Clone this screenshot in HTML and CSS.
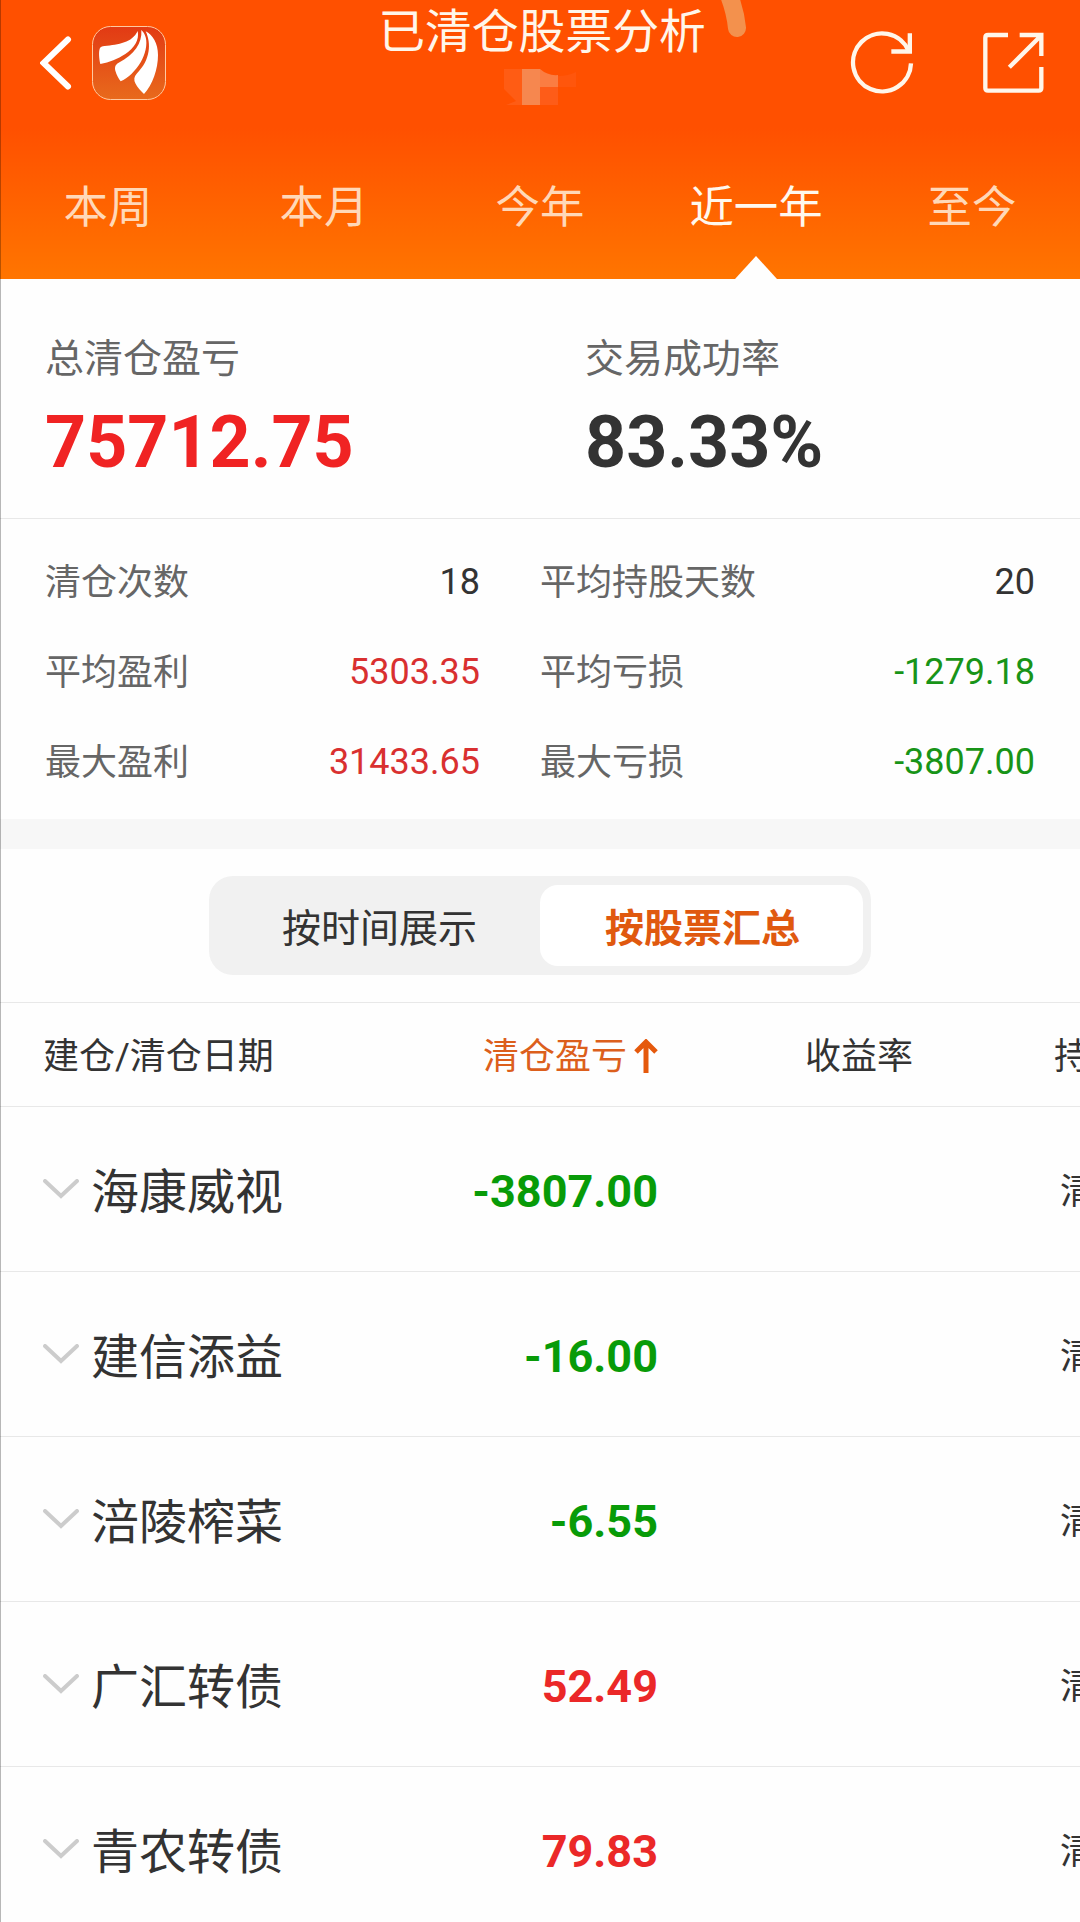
FILE: index.html
```
<!DOCTYPE html>
<html lang="zh-CN">
<head>
    <meta charset="UTF-8">
    <meta name="viewport" content="width=device-width, initial-scale=1.0">
    <title>已清仓股票分析</title>
    <link rel="stylesheet" href="styles.css">
</head>
<body>
    <header class="header">
        <div class="navbar">
            <div class="nav-left">
                <svg class="icon-back" viewBox="0 0 32 54">
                    <path d="M28 3.500 3.500 27l24.500 23.500" fill="none" stroke="#fff" stroke-width="6" stroke-linecap="round"/>
                </svg>
                <svg class="logo" viewBox="276 78 222 222">
                    <defs>
                        <linearGradient id="logoBg" x1="0" y1="0" x2="0" y2="1">
                            <stop offset="0" stop-color="#e23a14"/>
                            <stop offset="1" stop-color="#e86a1c"/>
                        </linearGradient>
                    </defs>
                    <rect x="277.500" y="79.500" width="219" height="219" rx="54" fill="url(#logoBg)" stroke="#ffc9a0" stroke-width="3"/>
                    <g fill="#fff">
                        <path d="M301 192C297 175 296 156 299 146C301 141 306 139 314 138C355 134 397 128 413 93C419 120 402 144 376 162C353 177 328 187 301 192Z"/>
                        <path d="M424 90C427 130 403 163 356 188C345 194 344 202 346 212C350 226 356 236 362 244C384 235 406 213 422 187C436 163 443 134 437 112C434 102 430 95 424 90Z"/>
                        <path d="M437 94C454 130 452 180 410 221C402 229 401 240 406 250C412 262 422 273 432 282C458 254 474 207 474 165C474 130 458 105 437 94Z"/>
                    </g>
                </svg>
            </div>
            <div class="nav-title">
                <h1>已清仓股票分析</h1>
                <svg class="mosaic" viewBox="0 0 72 44">
                    <path d="M0 3h18v36H2l10-4-12-12z" fill="#ff5c14"/>
                    <path d="M18 3h18v36H18z" fill="#f6874f"/>
                    <path d="M36 3q8 7 18 6v12H36z" fill="#fb7d42"/>
                    <path d="M36 21h18v18H36z" fill="#fe5c18"/>
                    <path d="M54 10q10 0 18-4v15H54z" fill="#ff560c"/>
                </svg>
                <svg class="streak" viewBox="0 0 32 38">
                    <path d="M10-12Q19 8 21 28" fill="none" stroke="#f3914d" stroke-width="18" stroke-linecap="round"/>
                </svg>
            </div>
            <div class="nav-right">
                <svg class="icon-refresh" viewBox="270 93 192 192">
                    <path d="M453 190A87 87 0 1 1 446 153" fill="none" stroke="#fff6ea" stroke-width="13"/>
                    <path d="M449.500 100V154.500H394" fill="none" stroke="#fff6ea" stroke-width="13"/>
                </svg>
                <svg class="icon-share" viewBox="666 93 192 192">
                    <path d="M744 105H684Q676 105 676 113V264Q676 272 684 272H836Q844 272 844 264V201" fill="none" stroke="#fff6ea" stroke-width="13"/>
                    <path d="M779 105H844V168M748 202L844 106" fill="none" stroke="#fff6ea" stroke-width="13"/>
                </svg>
            </div>
        </div>
        <nav class="tabs">
            <a class="tab">本周</a>
            <a class="tab">本月</a>
            <a class="tab">今年</a>
            <a class="tab active">近一年</a>
            <a class="tab">至今</a>
        </nav>
    </header>

    <section class="summary">
        <div class="summary-item">
            <div class="summary-label">总清仓盈亏</div>
            <div class="summary-value total">75712.75</div>
        </div>
        <div class="summary-item">
            <div class="summary-label">交易成功率</div>
            <div class="summary-value">83.33%</div>
        </div>
    </section>

    <section class="stats">
        <div class="stat"><span>清仓次数</span><b>18</b></div>
        <div class="stat"><span>平均持股天数</span><b>20</b></div>
        <div class="stat"><span>平均盈利</span><b class="up">5303.35</b></div>
        <div class="stat"><span>平均亏损</span><b class="down">-1279.18</b></div>
        <div class="stat"><span>最大盈利</span><b class="up">31433.65</b></div>
        <div class="stat"><span>最大亏损</span><b class="down">-3807.00</b></div>
    </section>

    <div class="switch-bar">
        <div class="switch">
            <div class="switch-item">按时间展示</div>
            <div class="switch-item selected">按股票汇总</div>
        </div>
    </div>

    <section class="table">
        <div class="row head">
            <div class="col-name">建仓/清仓日期</div>
            <div class="col-profit">清仓盈亏
                <svg class="icon-sort" viewBox="0 0 24 34">
                    <path d="M12 34V4M2 13 12 3l10 10" fill="none" stroke="#e5590c" stroke-width="5"/>
                </svg>
            </div>
            <div class="col-rate">收益率</div>
            <div class="col-hold">持</div>
        </div>
        <div class="row">
            <div class="col-name"><svg class="icon-down" viewBox="0 0 36 20"><path d="M2 2l16 15L34 2"/></svg>海康威视</div>
            <div class="col-profit down">-3807.00</div>
            <div class="col-rate"></div>
            <div class="col-hold">清</div>
        </div>
        <div class="row">
            <div class="col-name"><svg class="icon-down" viewBox="0 0 36 20"><path d="M2 2l16 15L34 2"/></svg>建信添益</div>
            <div class="col-profit down">-16.00</div>
            <div class="col-rate"></div>
            <div class="col-hold">清</div>
        </div>
        <div class="row">
            <div class="col-name"><svg class="icon-down" viewBox="0 0 36 20"><path d="M2 2l16 15L34 2"/></svg>涪陵榨菜</div>
            <div class="col-profit down">-6.55</div>
            <div class="col-rate"></div>
            <div class="col-hold">清</div>
        </div>
        <div class="row">
            <div class="col-name"><svg class="icon-down" viewBox="0 0 36 20"><path d="M2 2l16 15L34 2"/></svg>广汇转债</div>
            <div class="col-profit up">52.49</div>
            <div class="col-rate"></div>
            <div class="col-hold">清</div>
        </div>
        <div class="row">
            <div class="col-name"><svg class="icon-down" viewBox="0 0 36 20"><path d="M2 2l16 15L34 2"/></svg>青农转债</div>
            <div class="col-profit up">79.83</div>
            <div class="col-rate"></div>
            <div class="col-hold">清</div>
        </div>
    </section>
</body>
</html>
```
FILE: styles.css
```
* {
    box-sizing: border-box;
}
body {
    margin: 0;
    height: 1922px;
    overflow: hidden;
    position: relative;
    background-color: #fefefe;
    color: #333;
    font-family: Roboto, "Noto Sans CJK SC", sans-serif;
}
/* thin shadow on the left edge of the screen */
body::after {
    content: "";
    position: absolute;
    left: 0;
    top: 0;
    width: 1px;
    height: 100%;
    background-color: rgba(0, 0, 0, 0.28);
}
svg {
    display: block;
    flex: none;
}

/* header */
.header {
    height: 279px;
    background: linear-gradient(#ff5000 0, #ff5000 128px, #ff7500 279px);
}
.navbar {
    height: 134px;
    display: grid;
    grid-template-columns: 290px 504px 286px;
}
.nav-left {
    display: flex;
    align-items: flex-start;
    gap: 20px;
    padding: 26px 0 0 40px;
}
.icon-back {
    width: 32px;
    height: 54px;
    margin-top: 10px;
}
.logo {
    width: 74px;
    height: 74px;
}
.nav-title {
    position: relative;
    display: flex;
    flex-direction: column;
    align-items: center;
}
.nav-title h1 {
    margin: 1px 0 0;
    font-size: 46.800px;
    line-height: 62px;
    font-weight: normal;
    color: #fff6ea;
}
.mosaic {
    width: 72px;
    height: 44px;
    margin: 3px 4px 0 0;
}
.streak {
    position: absolute;
    top: 0;
    right: 46px;
    width: 32px;
    height: 38px;
}
.nav-right {
    display: flex;
    justify-content: flex-end;
    gap: 68px;
    padding: 31px 34px 0 0;
}
.icon-refresh,
.icon-share {
    width: 64px;
    height: 64px;
}
.tabs {
    display: grid;
    grid-template-columns: repeat(5, 1fr);
    height: 145px;
}
.tab {
    position: relative;
    font-size: 44.400px;
    line-height: 149px;
    height: 145px;
    text-align: center;
    color: #ffd8b8;
}
.tab.active {
    color: #fff8ee;
}
.tab.active::after {
    content: "";
    position: absolute;
    left: 50%;
    bottom: 0;
    margin-left: -21px;
    border: 21px solid transparent;
    border-top: 0;
    border-bottom: 23px solid #fefefe;
}

/* totals */
.summary {
    display: grid;
    grid-template-columns: 1fr 1fr;
    height: 240px;
    padding-top: 51px;
    border-bottom: 1px solid #e8e8e8;
}
.summary-item {
    padding-left: 45px;
}
.summary-label {
    font-size: 39px;
    line-height: 58px;
    color: #666;
}
.summary-value {
    font-size: 71.700px;
    line-height: 84px;
    margin-top: 13px;
    font-weight: bold;
}
.summary-value.total {
    color: #f02323;
}

.stats {
    display: grid;
    grid-template-columns: 435px 495px;
    column-gap: 60px;
    grid-auto-rows: 90px;
    height: 330px;
    padding: 18px 0 0 45px;
    border-bottom: 30px solid #f7f7f7;
}
.stat {
    display: flex;
    justify-content: space-between;
    font-size: 36px;
    line-height: 90px;
}
.stat span {
    line-height: 92px;
    color: #666;
}
.stat b {
    font-weight: normal;
}
.stat .up {
    color: #d93030;
}
.stat .down {
    color: #189418;
}

/* view switch */
.switch-bar {
    height: 154px;
    padding-top: 27px;
    border-bottom: 1px solid #e8e8e8;
}
.switch {
    display: flex;
    width: 662px;
    height: 99px;
    margin: 0 auto;
    padding: 9px 8px;
    border-radius: 24px;
    background-color: #f1f1f1;
}
.switch-item {
    flex: 1;
    padding-left: 2px;
    border-radius: 18px;
    font-size: 39px;
    line-height: 88px;
    text-align: center;
}
.switch-item.selected {
    background-color: #fff;
    color: #e0590f;
    font-weight: bold;
}

/* stock list, last column is cut by the screen edge */
.table {
    overflow: hidden;
}
.row {
    display: grid;
    grid-template-columns: 360px 298px 256px 166px;
    height: 165px;
    line-height: 170px;
    border-bottom: 1px solid #e8e8e8;
    white-space: nowrap;
}
.row.head {
    height: 104px;
    line-height: 109px;
    font-size: 36px;
}
.col-name {
    display: flex;
    padding-left: 43px;
    font-size: 48px;
    line-height: 172px;
}
.icon-down {
    width: 36px;
    height: 20px;
    margin: 72px 12px 0 0;
    fill: none;
    stroke: #ccc;
    stroke-width: 4;
    stroke-linecap: round;
}
.col-profit {
    font-size: 45px;
    font-weight: bold;
    text-align: right;
}
.col-profit.up {
    color: #eb2828;
}
.col-profit.down {
    color: #089b08;
}
.col-rate {
    padding-right: 1px;
    text-align: right;
}
.col-hold {
    overflow: hidden;
    padding-left: 146px;
    font-size: 36px;
}
.head .col-name,
.head .col-profit {
    font-size: 36px;
    line-height: 109px;
    font-weight: normal;
}
.head .col-profit {
    display: flex;
    justify-content: flex-end;
    gap: 7px;
    color: #dc5f1c;
}
.head .col-hold {
    padding-left: 140px;
}
.icon-sort {
    width: 24px;
    height: 34px;
    margin-top: 36px;
}
```
